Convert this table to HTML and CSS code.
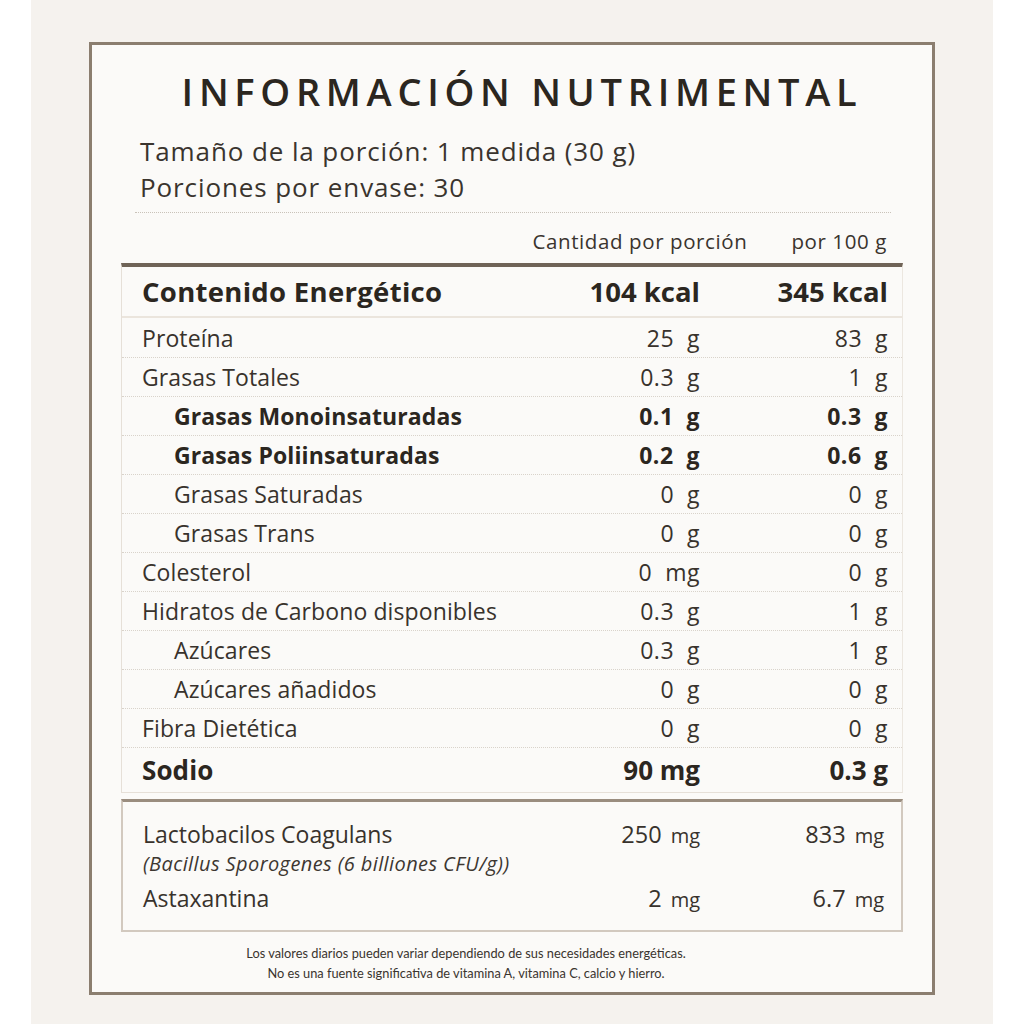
FILE: index.html
```html
<!DOCTYPE html>
<html lang="es">
<head>
<meta charset="utf-8">
<title>Información Nutrimental</title>
<link rel="stylesheet" href="styles.css">
</head>
<body>
<div class="page">
  <div class="card">
    <h1 class="title">INFORMACIÓN NUTRIMENTAL</h1>
    <div class="serving">
      <p>Tamaño de la porción: 1 medida (30 g)</p>
      <p>Porciones por envase: 30</p>
    </div>
    <div class="colhead">
      <span>Cantidad por porción</span>
      <span>por 100 g</span>
    </div>
    <div class="table">
      <div class="row energy"><span class="lbl">Contenido Energético</span><span class="val">104 kcal</span><span class="val">345 kcal</span></div>
      <div class="row"><span class="lbl">Proteína</span><span class="val">25&nbsp; g</span><span class="val">83&nbsp; g</span></div>
      <div class="row"><span class="lbl">Grasas Totales</span><span class="val">0.3&nbsp; g</span><span class="val">1&nbsp; g</span></div>
      <div class="row sub bold"><span class="lbl">Grasas Monoinsaturadas</span><span class="val">0.1&nbsp; g</span><span class="val">0.3&nbsp; g</span></div>
      <div class="row sub bold"><span class="lbl">Grasas Poliinsaturadas</span><span class="val">0.2&nbsp; g</span><span class="val">0.6&nbsp; g</span></div>
      <div class="row sub"><span class="lbl">Grasas Saturadas</span><span class="val">0&nbsp; g</span><span class="val">0&nbsp; g</span></div>
      <div class="row sub"><span class="lbl">Grasas Trans</span><span class="val">0&nbsp; g</span><span class="val">0&nbsp; g</span></div>
      <div class="row"><span class="lbl">Colesterol</span><span class="val">0&nbsp; mg</span><span class="val">0&nbsp; g</span></div>
      <div class="row"><span class="lbl">Hidratos de Carbono disponibles</span><span class="val">0.3&nbsp; g</span><span class="val">1&nbsp; g</span></div>
      <div class="row sub"><span class="lbl">Azúcares</span><span class="val">0.3&nbsp; g</span><span class="val">1&nbsp; g</span></div>
      <div class="row sub"><span class="lbl">Azúcares añadidos</span><span class="val">0&nbsp; g</span><span class="val">0&nbsp; g</span></div>
      <div class="row"><span class="lbl">Fibra Dietética</span><span class="val">0&nbsp; g</span><span class="val">0&nbsp; g</span></div>
      <div class="row sodio bold"><span class="lbl">Sodio</span><span class="val">90 mg</span><span class="val">0.3 g</span></div>
    </div>
    <div class="extra">
      <div class="xrow">
        <div class="xlbl">
          <span>Lactobacilos Coagulans</span>
          <span class="note">(Bacillus Sporogenes (6 billiones CFU/g))</span>
        </div>
        <span class="xval">250<small>mg</small></span>
        <span class="xval">833<small>mg</small></span>
      </div>
      <div class="xrow">
        <div class="xlbl"><span>Astaxantina</span></div>
        <span class="xval">2<small>mg</small></span>
        <span class="xval">6.7<small>mg</small></span>
      </div>
    </div>
    <p class="foot">Los valores diarios pueden variar dependiendo de sus necesidades energéticas.<br>No es una fuente significativa de vitamina A, vitamina C, calcio y hierro.</p>
  </div>
</div>
</body>
</html>
```

FILE: styles.css
```css
* { box-sizing: border-box; }
html, body { margin: 0; padding: 0; background: #ffffff; }
body { font-family: "Open Sans", Lato, sans-serif; color: #2f2a25; }

.page {
  margin-left: 31px;
  width: 962px;
  height: 1024px;
  background: #f5f2ee;
  padding-top: 42px;
}

.card {
  margin-left: 58px;
  width: 846px;
  height: 953px;
  border: 3px solid #8b7e6f;
  background: #fbfaf8;
  padding: 22px 29px 0 29px;
}

.title {
  margin: 0;
  height: 48px;
  line-height: 48px;
  text-align: center;
  font-size: 38px;
  font-weight: 600;
  letter-spacing: 5.7px;
  color: #2b2620;
  padding-left: 20px;
}

.serving {
  margin: 18px 12px 0 14px;
  padding: 0 0 7px 5px;
  border-bottom: 1px dotted #c9c2b9;
}
.serving p {
  margin: 0;
  line-height: 36px;
  font-size: 26px;
  letter-spacing: 0.9px;
  color: #3a342e;
}

.colhead {
  display: flex;
  justify-content: flex-end;
  gap: 44px;
  margin-top: 14px;
  padding-right: 16px;
  line-height: 28px;
  font-size: 20.5px;
  letter-spacing: 0.6px;
  color: #3a342e;
}

.table {
  margin-top: 8px;
  border-top: 4px solid #6f6357;
  border-left: 1px solid #e6e0d8;
  border-right: 1px solid #ece7e0;
  border-bottom: 1px solid #e6e0d8;
}

.row {
  display: grid;
  grid-template-columns: minmax(0, 1fr) 200px 188px;
  align-items: center;
  height: 39px;
  padding: 0 14px 0 20px;
  border-top: 1px dotted #d9d3cb;
  font-size: 23px;
  letter-spacing: 0.1px;
  color: #38322c;
}
.row .lbl { white-space: nowrap; }
.row .val { text-align: right; letter-spacing: 0.5px; white-space: nowrap; }
.row.sub { padding-left: 52px; }
.row.bold { font-weight: 700; color: #2b2620; font-size: 23px; letter-spacing: 0.1px; }

.row.energy {
  height: 51px;
  border-top: none;
  border-bottom: 2px solid #ebe5dd;
  font-size: 27.5px;
  letter-spacing: 0.3px;
  font-weight: 700;
  color: #2b2620;
}
.row.energy .val { letter-spacing: 0; }
.row.energy + .row { border-top: none; }
.row.sodio { height: 45px; font-size: 26px; }
.row.sodio .val { letter-spacing: 0; }

.extra {
  margin-top: 6px;
  height: 133px;
  border: 2px solid #d2c9bf;
  border-top: 3px solid #9a8d7f;
  padding: 17px 17px 0 20px;
}
.xrow {
  display: grid;
  grid-template-columns: minmax(0, 1fr) 200px 184px;
  align-items: start;
}
.xrow + .xrow { margin-top: 4px; }
.xlbl { display: flex; flex-direction: column; min-width: 0; }
.xlbl span { line-height: 30px; font-size: 23px; color: #38322c; white-space: nowrap; }
.xlbl .note {
  font-style: italic;
  font-size: 20px;
  letter-spacing: 0.4px;
  line-height: 30px;
  color: #3d3731;
}
.xval {
  text-align: right;
  line-height: 30px;
  font-size: 23.5px;
  color: #38322c;
  white-space: nowrap;
}
.xval small { font-size: 20px; margin-left: 9px; }

.foot {
  margin: 11px 0 0 0;
  padding-right: 92px;
  text-align: center;
  font-family: Lato, sans-serif;
  font-size: 12.8px;
  line-height: 20px;
  color: #3a342e;
}
```
